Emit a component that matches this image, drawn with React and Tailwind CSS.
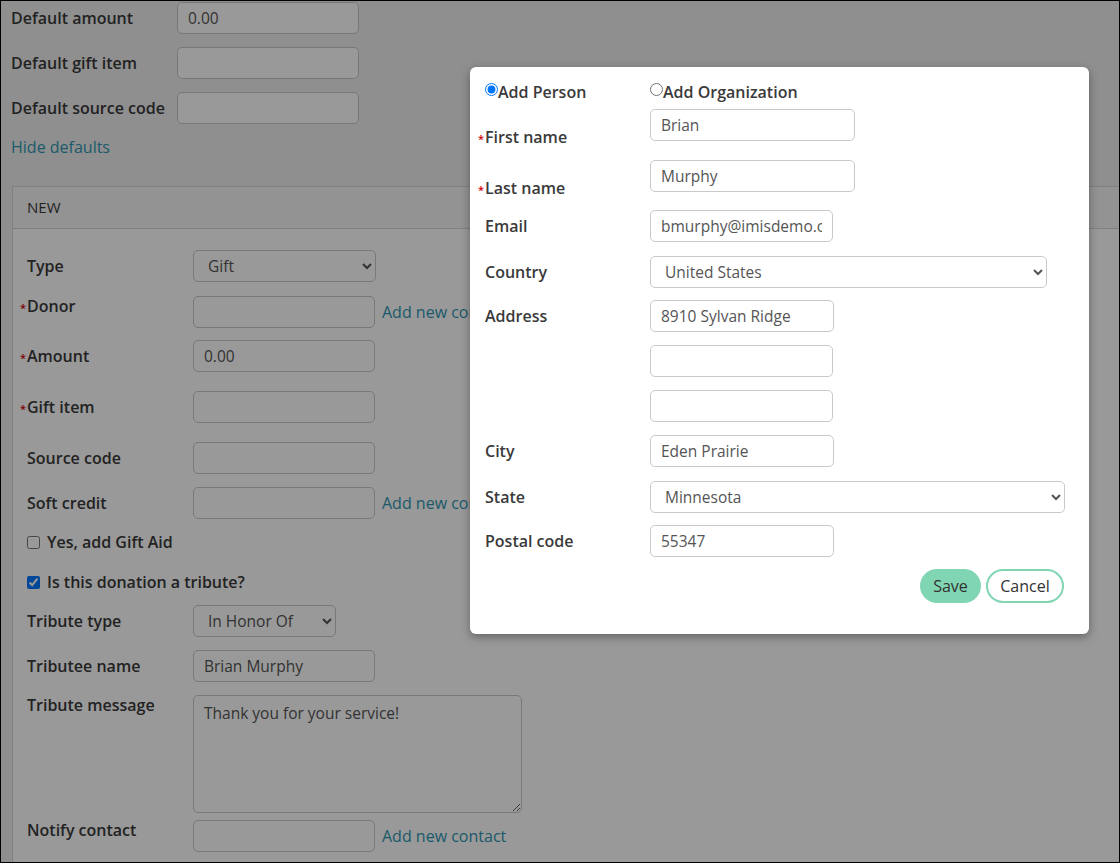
import React from "react";

const LBL = "text-[16px] font-semibold text-[#3a3a3a] leading-[20px] whitespace-nowrap";
const LINK = "text-[16px] text-[#2f97b2] leading-[20px] whitespace-nowrap";

function Star() {
  return <span className="inline-block w-[7px] h-[10px] -ml-[7px] text-[11px] leading-none text-[#d40000] align-[0px]">*</span>;
}

function Input({ value = "", w = "w-[182px]" }) {
  return (
    <input
      readOnly
      value={value}
      className={`h-[32px] ${w} shrink-0 rounded-[5px] border border-[#c9c9c9] bg-white px-[10px] text-[15.5px] text-[#555] outline-none`}
    />
  );
}

function Select({ value, w }) {
  return (
    <select
      value={value}
      onChange={() => {}}
      className={`h-[32px] ${w} shrink-0 rounded-[5px] border border-[#c9c9c9] bg-white pl-[10px] pr-[4px] text-[15.5px] text-[#555] outline-none`}
    >
      <option>{value}</option>
    </select>
  );
}

function TopRow({ label, value, mt }) {
  return (
    <div className={`flex items-center h-[32px] ${mt}`}>
      <div className={`w-[166px] ${LBL}`}>{label}</div>
      <Input value={value} />
    </div>
  );
}

export default function App() {
  return (
    <div className="relative w-[1120px] h-[863px] overflow-hidden border border-black bg-[#efefef] font-['Open_Sans',sans-serif]">
      {/* page */}
      <div className="pl-[10px] pt-[1px]">
        <TopRow label="Default amount" value="0.00" mt="" />
        <TopRow label="Default gift item" value="" mt="mt-[13px]" />
        <TopRow label="Default source code" value="" mt="mt-[13px]" />
        <div className={`mt-[13px] ${LINK}`}>Hide defaults</div>

        <div className="mt-[29px] ml-[1px] -mr-[40px] border border-[#d6d6d6] bg-white">
          <div className="h-[42px] flex items-center pl-[14px] bg-[#f5f5f5] border-b border-[#d6d6d6] text-[15px] text-[#3a3a3a]">
            NEW
          </div>
          <div className="pl-[14px] pt-[21px] pb-[40px]">
            <div className="flex items-center">
              <div className={`w-[166px] ${LBL}`}>Type</div>
              <Select value="Gift" w="w-[183px]" />
            </div>

            <div className="flex items-start mt-[14px]">
              <div className={`w-[166px] ${LBL}`}><Star />Donor</div>
              <div className="flex items-center">
                <Input />
                <span className={`ml-[7px] ${LINK}`}>Add new contact</span>
              </div>
            </div>

            <div className="flex items-center mt-[12px]">
              <div className={`w-[166px] ${LBL}`}><Star />Amount</div>
              <Input value="0.00" />
            </div>

            <div className="flex items-center mt-[19px]">
              <div className={`w-[166px] ${LBL}`}><Star />Gift item</div>
              <Input />
            </div>

            <div className="flex items-center mt-[19px]">
              <div className={`w-[166px] ${LBL}`}>Source code</div>
              <Input />
            </div>

            <div className="flex items-center mt-[13px]">
              <div className={`w-[166px] ${LBL}`}>Soft credit</div>
              <Input />
              <span className={`ml-[7px] ${LINK}`}>Add new contact</span>
            </div>

            <div className="flex items-center h-[20px] mt-[13px]">
              <input type="checkbox" readOnly className="m-0 w-[13px] h-[13px]" />
              <span className={`ml-[7px] ${LBL}`}>Yes, add Gift Aid</span>
            </div>

            <div className="flex items-center h-[20px] mt-[20px]">
              <input type="checkbox" checked readOnly className="m-0 w-[13px] h-[13px]" />
              <span className={`ml-[7px] ${LBL}`}>Is this donation a tribute?</span>
            </div>

            <div className="flex items-center mt-[13px]">
              <div className={`w-[166px] ${LBL}`}>Tribute type</div>
              <Select value="In Honor Of" w="w-[143px]" />
            </div>

            <div className="flex items-center mt-[13px]">
              <div className={`w-[166px] ${LBL}`}>Tributee name</div>
              <Input value="Brian Murphy" />
            </div>

            <div className="flex items-start mt-[13px]">
              <div className={`w-[166px] ${LBL}`}>Tribute message</div>
              <textarea
                readOnly
                value="Thank you for your service!"
                className="h-[118px] w-[329px] rounded-[5px] border border-[#c9c9c9] bg-white px-[10px] py-[6px] text-[15.5px] text-[#555] outline-none"
              />
            </div>

            <div className="flex items-start mt-[7px]">
              <div className={`w-[166px] ${LBL}`}>Notify contact</div>
              <div className="flex items-center">
                <Input />
                <span className={`ml-[7px] ${LINK}`}>Add new contact</span>
              </div>
            </div>
          </div>
        </div>
      </div>

      {/* overlay */}
      <div className="absolute inset-0 bg-black/40" />

      {/* modal */}
      <div className="absolute left-[469px] top-[66px] w-[619px] h-[567px] rounded-[6px] bg-white shadow-[0_3px_10px_rgba(0,0,0,0.35)] pl-[15px] pt-[15px]">
        <div className="flex items-center h-[20px]">
          <div className="w-[165px] flex items-center">
            <input type="radio" name="t" checked readOnly className="m-0 w-[13px] h-[13px] -mt-[6px]" />
            <span className={LBL}>Add Person</span>
          </div>
          <div className="flex items-center">
            <input type="radio" name="t" readOnly className="m-0 w-[13px] h-[13px] -mt-[6px]" />
            <span className={LBL}>Add Organization</span>
          </div>
        </div>

        <div className="flex items-start h-[38px] mt-[7px]">
          <div className={`w-[165px] mt-[18px] ${LBL}`}><Star />First name</div>
          <Input value="Brian" w="w-[205px]" />
        </div>

        <div className="flex items-start h-[38px] mt-[13px]">
          <div className={`w-[165px] mt-[18px] ${LBL}`}><Star />Last name</div>
          <Input value="Murphy" w="w-[205px]" />
        </div>

        <div className="flex items-center mt-[12px]">
          <div className={`w-[165px] ${LBL}`}>Email</div>
          <Input value="bmurphy@imisdemo.com" w="w-[183px]" />
        </div>

        <div className="flex items-center mt-[14px]">
          <div className={`w-[165px] ${LBL}`}>Country</div>
          <Select value="United States" w="w-[397px]" />
        </div>

        <div className="flex items-center mt-[12px]">
          <div className={`w-[165px] ${LBL}`}>Address</div>
          <Input value="8910 Sylvan Ridge" w="w-[184px]" />
        </div>

        <div className="flex items-center mt-[13px]">
          <div className="w-[165px]" />
          <Input w="w-[183px]" />
        </div>

        <div className="flex items-center mt-[13px]">
          <div className="w-[165px]" />
          <Input w="w-[183px]" />
        </div>

        <div className="flex items-center mt-[13px]">
          <div className={`w-[165px] ${LBL}`}>City</div>
          <Input value="Eden Prairie" w="w-[184px]" />
        </div>

        <div className="flex items-center mt-[14px]">
          <div className={`w-[165px] ${LBL}`}>State</div>
          <Select value="Minnesota" w="w-[415px]" />
        </div>

        <div className="flex items-center mt-[12px]">
          <div className={`w-[165px] ${LBL}`}>Postal code</div>
          <Input value="55347" w="w-[184px]" />
        </div>

        <div className="flex justify-end gap-[5px] mt-[12px] pr-[25px]">
          <button className="h-[34px] w-[61px] rounded-full bg-[#80d5b2] text-[16px] text-[#333]">Save</button>
          <button className="h-[34px] w-[78px] rounded-full border-2 border-[#80d5b2] bg-white text-[16px] text-[#333]">Cancel</button>
        </div>
      </div>
    </div>
  );
}
